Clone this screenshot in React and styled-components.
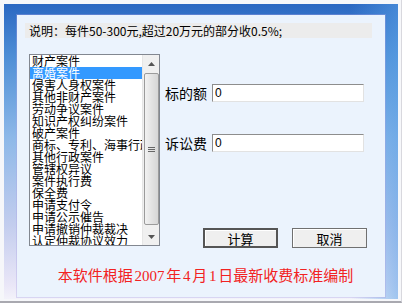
import React from 'react';
import styled, { createGlobalStyle } from 'styled-components';

const GlobalStyle = createGlobalStyle`
  html, body {
    margin: 0;
    padding: 0;
    background: #f4f5f8;
  }
  * { box-sizing: border-box; }
`;

const CJK = `"Noto Sans CJK SC", "Noto Sans", sans-serif`;

const Window = styled.div`
  width: 402px;
  height: 303px;
  padding: 4px 3px 2px 4px;
  background: #f6f7fa;
  border-bottom: 2px solid #a9a9b0;
  border-right: 1px solid #d8d8de;
`;

const Frame = styled.div`
  height: 100%;
  padding: 11px 13px 2px 13px;
  background:
    linear-gradient(to right, rgba(255,255,255,0) 0%, rgba(255,255,255,0) 88%, rgba(90,160,230,0.55) 100%),
    linear-gradient(to bottom, #2b68c2 0%, #4f8fd6 18%, #8db8e8 45%, #c3cdee 75%, #e9e6f7 95%, #f3f2fa 100%);
`;

const Panel = styled.div`
  height: 100%;
  background: #ebf3fd;
  padding: 8px 13px 0 8px;
  display: flex;
  flex-direction: column;
  box-shadow: 0 0 0 1px rgba(170, 160, 225, 0.35);
`;

const Note = styled.div`
  height: 15px;
  background: #ececec;
  font-family: ${CJK};
  font-size: 12px;
  line-height: 15px;
  color: #000;
  padding-left: 4px;
  white-space: nowrap;
`;

const Body = styled.div`
  display: flex;
  margin-top: 16px;
  padding-left: 4px;
`;

const ListBox = styled.div`
  width: 131px;
  height: 192px;
  background: #fff;
  border: 1px solid #828790;
  display: flex;
  overflow: hidden;
`;

const Items = styled.div`
  flex: 1;
  overflow: hidden;
  min-width: 0;
`;

const Item = styled.div`
  height: 12px;
  line-height: 12px;
  font-family: ${CJK};
  font-size: 12px;
  padding-left: 2px;
  white-space: nowrap;
  overflow: hidden;
  color: ${(p) => (p.$selected ? '#fff' : '#000')};
  background: ${(p) => (p.$selected ? '#3399ff' : 'transparent')};
`;

const ScrollBar = styled.div`
  width: 17px;
  background: #f0f0f0;
  border-left: 1px solid #e6e6e6;
  display: flex;
  flex-direction: column;
  align-items: center;
`;

const Arrow = styled.div`
  height: 17px;
  width: 100%;
  display: flex;
  align-items: center;
  justify-content: center;
`;

const Thumb = styled.div`
  flex: 1;
  width: 15px;
  margin: 1px 0 3px;
  border: 1px solid #9b9b9b;
  border-radius: 2px;
  background: linear-gradient(to right, #f2f2f2, #e3e3e3 50%, #d6d6d6);
  display: flex;
  align-items: center;
  justify-content: center;
`;

const Side = styled.div`
  flex: 1;
  padding-left: 5px;
  display: flex;
  flex-direction: column;
`;

const Field = styled.div`
  display: flex;
  align-items: center;
  margin-top: ${(p) => p.$top}px;
`;

const Label = styled.span`
  width: 47px;
  font-family: ${CJK};
  font-size: 14px;
  color: #000;
  white-space: nowrap;
`;

const Input = styled.input`
  width: 152px;
  height: 18px;
  border-style: solid;
  border-width: 1px;
  border-color: #8d8d8d #e2e2e2 #e2e2e2 #8d8d8d;
  background: #fff;
  font-family: "Liberation Sans", sans-serif;
  font-size: 12px;
  padding: 0 2px;
  outline: none;
`;

const Buttons = styled.div`
  display: flex;
  gap: 14px;
  margin-top: 75px;
  padding-left: 38px;
`;

const Button = styled.button`
  width: 75px;
  height: 20px;
  padding: 0;
  font-family: ${CJK};
  font-size: 13px;
  color: #000;
  background: #efefef;
  border: ${(p) => (p.$default ? '2px solid #555' : '1px solid #707070')};
  box-shadow: inset 1px 1px 0 #fff;
  line-height: 1;
`;

const Footer = styled.div`
  margin-top: 16px;
  text-align: center;
  padding-left: 14px;
  font-family: "Liberation Serif", "Noto Sans CJK SC", serif;
  font-size: 15px;
  word-spacing: -2px;
  color: #f22222;
  white-space: nowrap;
`;

const items = [
  '财产案件',
  '离婚案件',
  '侵害人身权案件',
  '其他非财产案件',
  '劳动争议案件',
  '知识产权纠纷案件',
  '破产案件',
  '商标、专利、海事行政案件',
  '其他行政案件',
  '管辖权异议',
  '案件执行费',
  '保全费',
  '申请支付令',
  '申请公示催告',
  '申请撤销仲裁裁决',
  '认定仲裁协议效力',
];

const Tri = ({ up }) => (
  <svg width="7" height="4" viewBox="0 0 7 4">
    <path d={up ? 'M0 4 L3.5 0 L7 4 Z' : 'M0 0 L3.5 4 L7 0 Z'} fill="#555" />
  </svg>
);

const Grip = () => (
  <svg width="7" height="7" viewBox="0 0 7 7">
    <path d="M0 1.5 H7 M0 3.5 H7 M0 5.5 H7" stroke="#666" strokeWidth="1" />
  </svg>
);

export default function App() {
  return (
    <>
      <GlobalStyle />
      <Window>
        <Frame>
          <Panel>
            <Note>说明：每件50-300元,超过20万元的部分收0.5%;</Note>
            <Body>
              <ListBox>
                <Items>
                  {items.map((t, i) => (
                    <Item key={t} $selected={i === 1}>{t}</Item>
                  ))}
                </Items>
                <ScrollBar>
                  <Arrow><Tri up /></Arrow>
                  <Thumb><Grip /></Thumb>
                  <Arrow><Tri /></Arrow>
                </ScrollBar>
              </ListBox>
              <Side>
                <Field $top={29}>
                  <Label>标的额</Label>
                  <Input defaultValue="0" />
                </Field>
                <Field $top={30}>
                  <Label>诉讼费</Label>
                  <Input defaultValue="0" />
                </Field>
                <Buttons>
                  <Button $default>计算</Button>
                  <Button>取消</Button>
                </Buttons>
              </Side>
            </Body>
            <Footer>本软件根据 2007 年 4 月 1 日最新收费标准编制</Footer>
          </Panel>
        </Frame>
      </Window>
    </>
  );
}
